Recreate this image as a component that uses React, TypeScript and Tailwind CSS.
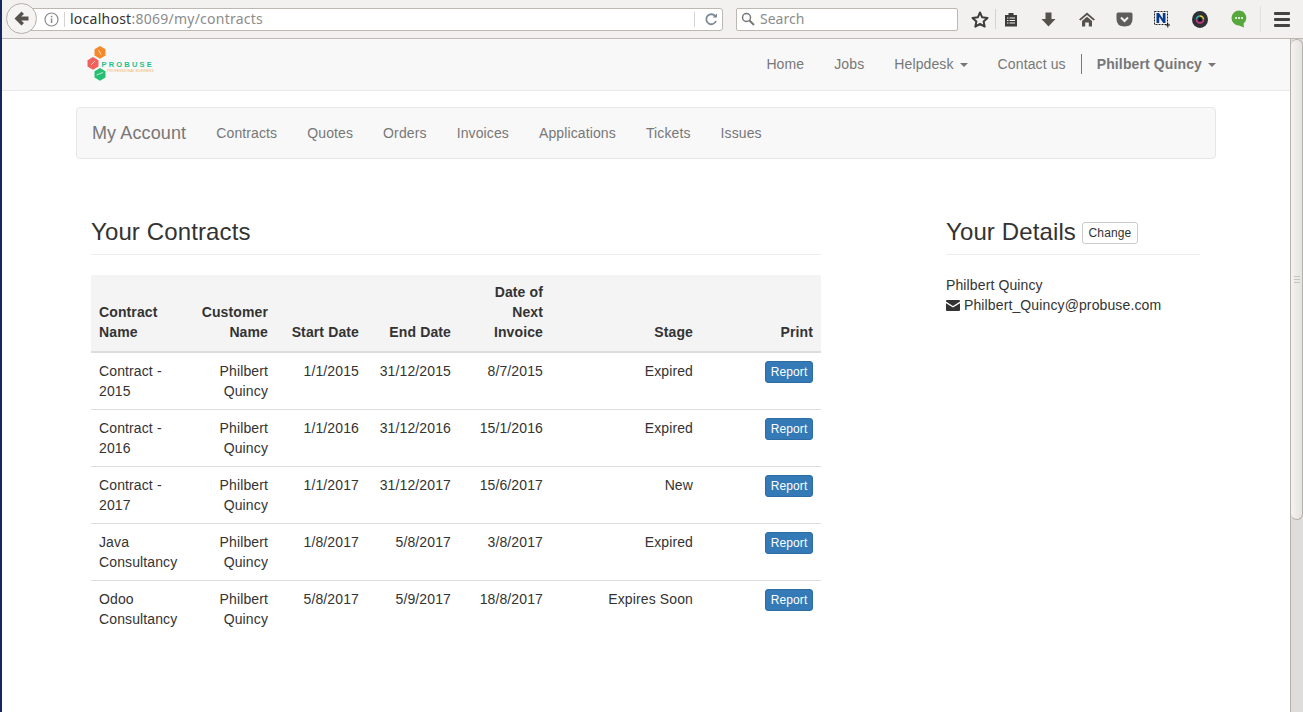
const rows = [
  { name: "Contract - 2015", start: "1/1/2015", end: "31/12/2015", next: "8/7/2015", stage: "Expired" },
  { name: "Contract - 2016", start: "1/1/2016", end: "31/12/2016", next: "15/1/2016", stage: "Expired" },
  { name: "Contract - 2017", start: "1/1/2017", end: "31/12/2017", next: "15/6/2017", stage: "New" },
  { name: "Java Consultancy", start: "1/8/2017", end: "5/8/2017", next: "3/8/2017", stage: "Expired" },
  { name: "Odoo Consultancy", start: "5/8/2017", end: "5/9/2017", next: "18/8/2017", stage: "Expires Soon" },
];

const accountLinks = ["Contracts", "Quotes", "Orders", "Invoices", "Applications", "Tickets", "Issues"];

const Caret = () => (
  <span className="inline-block ml-[6px] align-middle w-0 h-0 border-x-[4px] border-x-transparent border-t-[4px] border-t-[#777]" />
);

const BrowserBar = () => (
  <div className="h-[39px] bg-[#f2f1ef] border-b border-[#bdb8b2] flex items-center relative tracking-normal font-['Noto_Sans',sans-serif]">
    <div className="absolute left-[6px] top-[3px] w-[31px] h-[31px] rounded-full bg-[#f5f4f2] border border-[#b5b1ab] flex items-center justify-center z-10">
      <svg width="15" height="15" viewBox="0 0 15 15">
        <path d="M7.5 0.5 L0.5 7.5 L7.5 14.5 L10 12 L7.2 9.6 H14.5 V5.4 H7.2 L10 3 Z" fill="#55524e" />
      </svg>
    </div>
    <div className="ml-[30px] w-[693px] h-[23px] bg-white border border-[#bdb8b2] rounded-r-[3px] flex items-center">
      <svg className="ml-[13px]" width="15" height="15" viewBox="0 0 15 15">
        <circle cx="7.5" cy="7.5" r="6.5" fill="none" stroke="#8a8a8a" strokeWidth="1.2" />
        <rect x="6.8" y="6.5" width="1.5" height="4.5" fill="#8a8a8a" />
        <rect x="6.8" y="3.8" width="1.5" height="1.6" fill="#8a8a8a" />
      </svg>
      <span className="ml-[5px] w-px h-[15px] bg-[#d5d3d0]" />
      <span className="ml-[5px] text-[14px] tracking-[0.25px] text-[#333]">localhost<span className="text-[#8c8c8c]">:8069/my/contracts</span></span>
      <span className="ml-auto w-px h-[15px] bg-[#d5d3d0]" />
      <svg className="ml-[10px] mr-[4px]" width="13" height="13" viewBox="0 0 13 13">
        <path d="M10.5 3.5 A5 5 0 1 0 11 8" fill="none" stroke="#7d8a96" strokeWidth="1.8" />
        <path d="M7.5 4.5 L12 4.5 L12 0.5 Z" fill="#7d8a96" />
      </svg>
    </div>
    <div className="ml-[13px] w-[222px] h-[23px] bg-white border border-[#bdb8b2] rounded-[2px] flex items-center">
      <svg className="ml-[4px]" width="14" height="14" viewBox="0 0 14 14">
        <circle cx="5.5" cy="5.5" r="4" fill="none" stroke="#777" strokeWidth="1.5" />
        <path d="M8.5 8.5 L13 13" stroke="#777" strokeWidth="2" />
      </svg>
      <span className="ml-[5px] text-[14px] text-[#8c8c8c]">Search</span>
    </div>
    <div className="ml-[13px] w-[18px] flex justify-center">
      <svg width="18" height="17" viewBox="0 0 18 17">
        <path d="M9 1.5 L11.2 6.3 L16.5 6.9 L12.6 10.4 L13.7 15.6 L9 13 L4.3 15.6 L5.4 10.4 L1.5 6.9 L6.8 6.3 Z" fill="none" stroke="#3f3d3a" strokeWidth="2" strokeLinejoin="round" />
      </svg>
    </div>
    <span className="ml-[6px] w-px h-[20px] bg-[#d5d3d0]" />
    <svg className="ml-[8px]" width="14" height="15" viewBox="0 0 14 15">
      <path d="M1 3 H4.5 V1 H9.5 V3 H13 V14.5 H1 Z" fill="#3f3d3a" />
      <path d="M3 6 H11 M3 8.5 H11 M3 11 H11" stroke="#f2f1ef" strokeWidth="1.2" />
      <path d="M5 5 V12" stroke="#3f3d3a" strokeWidth="1" />
    </svg>
    <svg className="ml-[23px]" width="15" height="15" viewBox="0 0 15 15">
      <path d="M4.5 0.5 H10.5 V7 H14.5 L7.5 14.5 L0.5 7 H4.5 Z" fill="#55524e" />
    </svg>
    <svg className="ml-[23px]" width="16" height="15" viewBox="0 0 16 15">
      <path d="M8 0.5 L16 7.5 L14.5 8.5 L8 3 L1.5 8.5 L0 7.5 Z" fill="#55524e" />
      <path d="M3 9 L8 4.8 L13 9 V14.5 H9.8 V10.5 H6.2 V14.5 H3 Z" fill="#55524e" />
    </svg>
    <svg className="ml-[21px]" width="17" height="15" viewBox="0 0 17 15">
      <path d="M0.5 2 Q0.5 0.5 2 0.5 H15 Q16.5 0.5 16.5 2 V7 Q16.5 14.5 8.5 14.5 Q0.5 14.5 0.5 7 Z" fill="#5f5d5a" />
      <path d="M5 5.5 L8.5 9 L12 5.5" fill="none" stroke="#f2f1ef" strokeWidth="2" />
    </svg>
    <svg className="ml-[21px]" width="16" height="17" viewBox="0 0 16 17">
      <rect x="0.5" y="0.5" width="13" height="13" fill="none" stroke="#222" strokeDasharray="2 1" />
      <path d="M2.5 12 V2 H5 L8.8 7.8 V2 H11.5 V12 H9.2 L5.2 5.8 V12 Z" fill="#0b3a8c" />
      <path d="M11.5 14 H16 M13.8 12 V16.5" stroke="#111" strokeWidth="1" />
    </svg>
    <svg className="ml-[22px]" width="16" height="17" viewBox="0 0 16 17">
      <ellipse cx="8" cy="8.5" rx="8" ry="8.5" fill="#2f3033" />
      <path d="M4.5 8.5 A3.5 3.5 0 0 1 8 5" fill="none" stroke="#29b6c9" strokeWidth="1.6" />
      <path d="M8 5 A3.5 3.5 0 0 1 11.5 8.5" fill="none" stroke="#e8d23a" strokeWidth="1.6" />
      <path d="M11.5 8.5 A3.5 3.5 0 0 1 4.5 8.5" fill="none" stroke="#d6388f" strokeWidth="1.6" />
      <circle cx="8" cy="8.5" r="1.5" fill="#111" />
    </svg>
    <svg className="ml-[23px]" width="16" height="18" viewBox="0 0 16 18">
      <path d="M8 0.5 A7.5 7.5 0 1 0 8 15.5 L13 17.5 L12.5 13.8 A7.5 7.5 0 0 0 8 0.5 Z" fill="#57a73c" />
      <circle cx="5" cy="8" r="1" fill="#fff" />
      <circle cx="8" cy="8" r="1" fill="#fff" />
      <circle cx="11" cy="8" r="1" fill="#fff" />
    </svg>
    <span className="ml-[13px] w-px h-[26px] bg-[#e2e0dd]" />
    <div className="ml-[13px] w-[16px] flex flex-col gap-[3px]">
      <span className="h-[3px] bg-[#45433f] rounded-[1px]" />
      <span className="h-[3px] bg-[#45433f] rounded-[1px]" />
      <span className="h-[3px] bg-[#45433f] rounded-[1px]" />
    </div>
  </div>
);

const Logo = () => (
  <svg width="70" height="38" viewBox="0 0 70 38">
    <path d="M14 1 L19.5 4.2 V10.6 L14 13.8 L8.5 10.6 V4.2 Z" fill="#f5892a" />
    <path d="M7 12 L12.5 15.2 V21.6 L7 24.8 L1.5 21.6 V15.2 Z" fill="#f2605c" />
    <path d="M14 23 L19.5 26.2 V32.6 L14 35.8 L8.5 32.6 V26.2 Z" fill="#27bf72" />
    <path d="M12.5 5 L15 9.5 M5 20 L9 16 M10.5 30 L17 27.5" stroke="#ffffff" strokeOpacity="0.7" strokeWidth="1" />
    <text x="15.5" y="21.5" fontSize="7.5" fontWeight="700" letterSpacing="2.2" fill="#1fbf8c" fontFamily="'Liberation Sans', sans-serif">PROBUSE</text>
    <text x="21" y="27" fontSize="3.4" fill="#f3b25c" fontFamily="'Liberation Sans', sans-serif">PROFESSIONAL BUSINESS</text>
  </svg>
);

const Navbar = () => (
  <nav className="h-[52px] bg-[#f8f8f8] border-b border-[#e7e7e7] text-[#777]">
    <div className="w-[1170px] ml-[60px] px-[15px] h-[51px] flex items-center">
      <div className="ml-[10px] mt-[-2px]"><Logo /></div>
      <div className="ml-auto mr-[-15px] mt-[-2px] flex items-center">
        <a className="px-[15px]">Home</a>
        <a className="px-[15px]">Jobs</a>
        <a className="px-[15px]">Helpdesk<Caret /></a>
        <a className="px-[15px]">Contact us</a>
        <span className="w-px h-[20px] bg-[#777]" />
        <a className="px-[15px] font-bold">Philbert Quincy<Caret /></a>
      </div>
    </div>
  </nav>
);

const AccountNav = () => (
  <div className="mt-[16px] h-[52px] bg-[#f8f8f8] border border-[#e7e7e7] rounded-[4px] flex items-center text-[#777]">
    <span className="px-[15px] text-[18px]">My Account</span>
    {accountLinks.map((link) => (
      <a key={link} className="px-[15px]">{link}</a>
    ))}
  </div>
);

const ContractsTable = () => (
  <table className="w-[730px] mt-[20px] table-fixed border-collapse">
    <colgroup>
      <col className="w-[102px]" />
      <col className="w-[83px]" />
      <col className="w-[91px]" />
      <col className="w-[92px]" />
      <col className="w-[92px]" />
      <col className="w-[150px]" />
      <col className="w-[120px]" />
    </colgroup>
    <thead>
      <tr className="bg-[#f4f4f4] border-b-2 border-[#ddd] font-bold align-bottom">
        <th className="px-[8px] pt-[7px] pb-[9px] text-left">Contract Name</th>
        <th className="px-[8px] pt-[7px] pb-[9px] text-right">Customer Name</th>
        <th className="px-[8px] pt-[7px] pb-[9px] text-right">Start Date</th>
        <th className="px-[8px] pt-[7px] pb-[9px] text-right">End Date</th>
        <th className="px-[8px] pt-[7px] pb-[9px] text-right">Date of Next Invoice</th>
        <th className="px-[8px] pt-[7px] pb-[9px] text-right">Stage</th>
        <th className="px-[8px] pt-[7px] pb-[9px] text-right">Print</th>
      </tr>
    </thead>
    <tbody>
      {rows.map((row, i) => (
        <tr key={row.name} className={i < rows.length - 1 ? "border-b border-[#ddd] align-top" : "align-top"}>
          <td className="p-[8px]">{row.name}</td>
          <td className="p-[8px] text-right">Philbert Quincy</td>
          <td className="p-[8px] text-right">{row.start}</td>
          <td className="p-[8px] text-right">{row.end}</td>
          <td className="p-[8px] text-right">{row.next}</td>
          <td className="p-[8px] text-right">{row.stage}</td>
          <td className="p-[8px] text-right">
            <button className="h-[22px] w-[48px] bg-[#337ab7] border border-[#2e6da4] rounded-[3px] text-white text-[12px] leading-[18px]">Report</button>
          </td>
        </tr>
      ))}
    </tbody>
  </table>
);

const Details = () => (
  <aside className="w-[254px] ml-[125px]">
    <div className="h-[37px] border-b border-[#eee] flex items-start">
      <h3 className="text-[24px] leading-[26px] mt-[1px]">Your Details</h3>
      <button className="ml-[6px] mt-[4px] h-[22px] w-[56px] bg-white border border-[#ccc] rounded-[3px] text-[12px] leading-[18px]">Change</button>
    </div>
    <div className="mt-[20px]">
      <div>Philbert Quincy</div>
      <div className="flex items-center">
        <svg className="mr-[4px]" width="14" height="11" viewBox="0 0 14 11">
          <path d="M1 0 H13 Q14 0 14 1 V1.6 L7 6 L0 1.6 V1 Q0 0 1 0 Z" fill="#333" />
          <path d="M0 3.2 L7 7.6 L14 3.2 V10 Q14 11 13 11 H1 Q0 11 0 10 Z" fill="#333" />
        </svg>
        Philbert_Quincy@probuse.com
      </div>
    </div>
  </aside>
);

const Scrollbar = () => (
  <div className="w-[13px] bg-[#dedddb] border-l border-[#b5b1ab]">
    <div className="h-[481px] bg-gradient-to-r from-[#f4f3f1] to-[#e4e3e0] border border-l-0 border-[#b5b1ab] rounded-[7px] flex flex-col items-center justify-center gap-[2px]">
      <span className="w-[6px] h-px bg-[#c4c2bf]" />
      <span className="w-[6px] h-px bg-[#c4c2bf]" />
      <span className="w-[6px] h-px bg-[#c4c2bf]" />
    </div>
  </div>
);

export default function App() {
  return (
    <div className="relative w-[1303px] h-[712px] overflow-hidden flex flex-col bg-white text-[14px] leading-[20px] tracking-[0.12px] text-[#333] font-['Liberation_Sans',Arial,sans-serif]">
      <div className="absolute left-0 top-0 z-20 w-[2px] h-full bg-[#14285f]" />
      <BrowserBar />
      <div className="flex-1 flex min-h-0">
        <main className="ml-px w-[1289px]">
          <Navbar />
          <div className="w-[1140px] ml-[75px]">
            <AccountNav />
            <div className="mt-[59px] ml-[15px] flex items-start">
              <section className="w-[730px]">
                <div className="h-[37px] pt-[1px] border-b border-[#eee]">
                  <h3 className="text-[24px] leading-[26px]">Your Contracts</h3>
                </div>
                <ContractsTable />
              </section>
              <Details />
            </div>
          </div>
        </main>
        <Scrollbar />
      </div>
    </div>
  );
}
